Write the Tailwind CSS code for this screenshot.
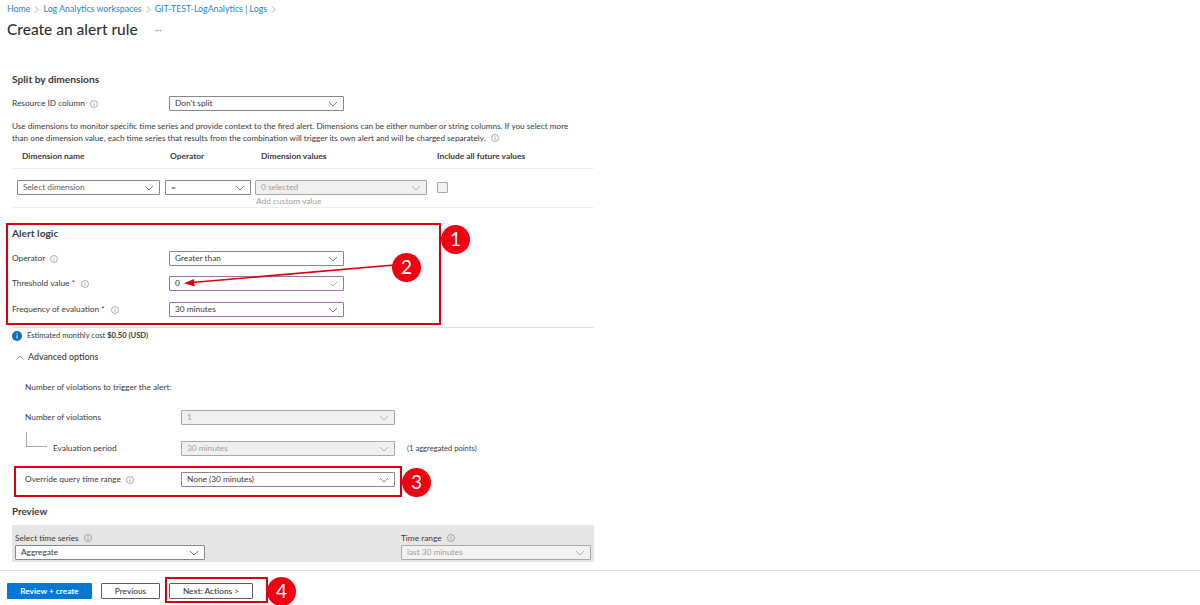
<!DOCTYPE html>
<html lang="en">
  <head>
    <meta charset="UTF-8" />
    <title>Create an alert rule</title>
    <script src="https://cdn.jsdelivr.net/npm/@tailwindcss/browser@4"></script>
  </head>
  <body>
    <div class="relative w-[1200px] h-[605px] overflow-hidden bg-white flex flex-col font-['Lato',sans-serif] text-[8.3px] text-[#3b3a39]">
      <!-- header -->
      <nav class="h-[18px] pl-[7px] flex items-center gap-[4px] text-[8.8px] text-[#2f7fc0]">
        <span>Home</span>
        <svg class="w-[5px] h-[7px]" viewBox="0 0 5 7" fill="none" stroke="#8a8886" stroke-width="0.7"><path d="M1 .5 4 3.5 1 6.5" /></svg>
        <span>Log Analytics workspaces</span>
        <svg class="w-[5px] h-[7px]" viewBox="0 0 5 7" fill="none" stroke="#8a8886" stroke-width="0.7"><path d="M1 .5 4 3.5 1 6.5" /></svg>
        <span>GIT-TEST-LogAnalytics | Logs</span>
        <svg class="w-[5px] h-[7px]" viewBox="0 0 5 7" fill="none" stroke="#8a8886" stroke-width="0.7"><path d="M1 .5 4 3.5 1 6.5" /></svg>
      </nav>
      <div class="h-[24px] pl-[7px] flex items-center">
        <h1 class="text-[15.5px] font-medium text-[#323130]">Create an alert rule</h1>
        <span class="ml-[17px] text-[9px] text-[#8a8886]">···</span>
      </div>

      <main class="flex-1 overflow-hidden px-[12px] w-[606px]">
        <!-- split by dimensions -->
        <h2 class="mt-[30px] h-[14px] leading-[14px] text-[10.2px] font-bold">Split by dimensions</h2>
        <div class="mt-[10px] h-[15px] flex items-center">
          <div class="w-[157px] flex items-center gap-[5px]">
            <span>Resource ID column</span>
            <svg class="w-[8px] h-[8px]" viewBox="0 0 8 8" fill="none" stroke="#77757a" stroke-width="0.6"><circle cx="4" cy="4" r="3.5" /><path d="M4 3.4V6M4 2v.7" /></svg>
          </div>
          <div class="w-[175px] h-[15px] border border-[#8a8886] rounded-[1px] flex items-center justify-between pl-[5px] pr-[5px]">
            <span>Don't split</span>
            <svg class="w-[10px] h-[6px]" viewBox="0 0 10 6" fill="none" stroke="#605e5c" stroke-width="0.8"><path d="M1 1 5 5 9 1" /></svg>
          </div>
        </div>
        <p class="mt-[10px] w-[566px] text-[8.2px] leading-[11.5px]">
          Use dimensions to monitor specific time series and provide context to the fired alert. Dimensions can be either number or string columns. If you select more than one dimension value, each time series that results from the combination will trigger its own alert and will be charged separately.
          <svg class="inline w-[8px] h-[8px] ml-[3px]" viewBox="0 0 8 8" fill="none" stroke="#77757a" stroke-width="0.6"><circle cx="4" cy="4" r="3.5" /><path d="M4 3.4V6M4 2v.7" /></svg>
        </p>
        <div class="mt-[6px] h-[19px] pb-[5px] border-b border-[#eeeeee] flex items-center font-bold text-[8.4px]">
          <span class="ml-[10px] w-[148px]">Dimension name</span>
          <span class="w-[91px]">Operator</span>
          <span class="w-[176px]">Dimension values</span>
          <span>Include all future values</span>
        </div>
        <div class="pt-[11px] h-[39px] border-b border-[#eeeeee]">
          <div class="h-[15px] flex items-center">
            <div class="ml-[5px] w-[143px] h-[15px] border border-[#8a8886] rounded-[1px] flex items-center justify-between px-[5px] text-[#605e5c]">
              <span>Select dimension</span>
              <svg class="w-[10px] h-[6px]" viewBox="0 0 10 6" fill="none" stroke="#605e5c" stroke-width="0.8"><path d="M1 1 5 5 9 1" /></svg>
            </div>
            <div class="ml-[5px] w-[86px] h-[15px] border border-[#8a8886] rounded-[1px] flex items-center justify-between px-[5px]">
              <span>=</span>
              <svg class="w-[10px] h-[6px]" viewBox="0 0 10 6" fill="none" stroke="#605e5c" stroke-width="0.8"><path d="M1 1 5 5 9 1" /></svg>
            </div>
            <div class="ml-[4px] w-[172px] h-[15px] border border-[#a8a8a8] bg-[#f0f0f0] rounded-[1px] flex items-center justify-between px-[5px] text-[#a19f9d]">
              <span>0 selected</span>
              <svg class="w-[10px] h-[6px]" viewBox="0 0 10 6" fill="none" stroke="#a19f9d" stroke-width="0.8"><path d="M1 1 5 5 9 1" /></svg>
            </div>
            <div class="ml-[10px] w-[11px] h-[11px] border border-[#a8a8a8] bg-[#f3f2f1] rounded-[1px]"></div>
          </div>
          <div class="ml-[244px] h-[12px] leading-[12px] text-[#a19f9d] text-[8.4px]">Add custom value</div>
        </div>

        <!-- alert logic -->
        <h2 class="mt-[20px] h-[11px] leading-[10px] border-b border-[#f3f2f1] text-[10.2px] font-bold w-[425px]">Alert logic</h2>
        <div class="mt-[12px] h-[15px] flex items-center">
          <div class="w-[157px] flex items-center gap-[5px]">
            <span>Operator</span>
            <svg class="w-[8px] h-[8px]" viewBox="0 0 8 8" fill="none" stroke="#77757a" stroke-width="0.6"><circle cx="4" cy="4" r="3.5" /><path d="M4 3.4V6M4 2v.7" /></svg>
          </div>
          <div class="w-[175px] h-[15px] border border-[#8a8886] rounded-[1px] flex items-center justify-between px-[5px]">
            <span>Greater than</span>
            <svg class="w-[10px] h-[6px]" viewBox="0 0 10 6" fill="none" stroke="#605e5c" stroke-width="0.8"><path d="M1 1 5 5 9 1" /></svg>
          </div>
        </div>
        <div class="mt-[10px] h-[15px] flex items-center">
          <div class="w-[157px] flex items-center gap-[6px]">
            <span>Threshold value <span class="text-[#a4262c]">*</span></span>
            <svg class="w-[8px] h-[8px]" viewBox="0 0 8 8" fill="none" stroke="#77757a" stroke-width="0.6"><circle cx="4" cy="4" r="3.5" /><path d="M4 3.4V6M4 2v.7" /></svg>
          </div>
          <div class="w-[175px] h-[15px] border border-[#a06cb8] rounded-[1px] flex items-center justify-between px-[5px]">
            <span>0</span>
            <svg class="w-[8px] h-[6px]" viewBox="0 0 8 6" fill="none" stroke="#7fb069" stroke-width="0.8"><path d="M1 3.2 3 5 7 1" /></svg>
          </div>
        </div>
        <div class="mt-[11px] h-[15px] flex items-center">
          <div class="w-[157px] flex items-center gap-[6px]">
            <span>Frequency of evaluation <span class="text-[#a4262c]">*</span></span>
            <svg class="w-[8px] h-[8px]" viewBox="0 0 8 8" fill="none" stroke="#77757a" stroke-width="0.6"><circle cx="4" cy="4" r="3.5" /><path d="M4 3.4V6M4 2v.7" /></svg>
          </div>
          <div class="w-[175px] h-[15px] border border-[#a06cb8] rounded-[1px] flex items-center justify-between px-[5px]">
            <span>30 minutes</span>
            <svg class="w-[10px] h-[6px]" viewBox="0 0 10 6" fill="none" stroke="#605e5c" stroke-width="0.8"><path d="M1 1 5 5 9 1" /></svg>
          </div>
        </div>
        <div class="mt-[10px] border-t border-[#e1dfdd] h-[17px] flex items-center gap-[5px] text-[7.6px]">
          <svg class="w-[10px] h-[10px]" viewBox="0 0 10 10"><circle cx="5" cy="5" r="5" fill="#0f6cbd" /><path d="M5 4.3v3.2M5 2.3v1" stroke="#fff" stroke-width="1" /></svg>
          <span>Estimated monthly cost <b class="font-bold">$0.50 (USD)</b></span>
        </div>

        <!-- advanced options -->
        <div class="mt-[6px] h-[14px] pl-[4px] flex items-center gap-[4px] text-[8.9px] font-medium">
          <svg class="w-[8px] h-[5px]" viewBox="0 0 8 5" fill="none" stroke="#605e5c" stroke-width="0.7"><path d="M.5 4.5 4 1 7.5 4.5" /></svg>
          <span>Advanced options</span>
        </div>
        <div class="mt-[16px] h-[14px] leading-[14px] pl-[13px]">Number of violations to trigger the alert:</div>
        <div class="mt-[16px] h-[15px] pl-[13px] flex items-center">
          <span class="w-[156px]">Number of violations</span>
          <div class="w-[214px] h-[15px] border border-[#a8a8a8] bg-[#f0f0f0] rounded-[1px] flex items-center justify-between px-[5px] text-[#a19f9d]">
            <span>1</span>
            <svg class="w-[10px] h-[6px]" viewBox="0 0 10 6" fill="none" stroke="#a19f9d" stroke-width="0.8"><path d="M1 1 5 5 9 1" /></svg>
          </div>
        </div>
        <div class="relative mt-[16px] h-[15px] pl-[41px] flex items-center">
          <div class="absolute left-[14px] top-[-9px] w-[21px] h-[15px] border-l border-b border-[#a8a8a8]"></div>
          <span class="w-[128px]">Evaluation period</span>
          <div class="w-[214px] h-[15px] border border-[#a8a8a8] bg-[#f0f0f0] rounded-[1px] flex items-center justify-between px-[5px] text-[#a19f9d]">
            <span>30 minutes</span>
            <svg class="w-[10px] h-[6px]" viewBox="0 0 10 6" fill="none" stroke="#a19f9d" stroke-width="0.8"><path d="M1 1 5 5 9 1" /></svg>
          </div>
          <span class="ml-[12px] text-[7.6px] whitespace-nowrap">(1 aggregated points)</span>
        </div>
        <div class="mt-[16px] h-[15px] pl-[13px] flex items-center">
          <div class="w-[156px] flex items-center gap-[5px]">
            <span>Override query time range</span>
            <svg class="w-[8px] h-[8px]" viewBox="0 0 8 8" fill="none" stroke="#77757a" stroke-width="0.6"><circle cx="4" cy="4" r="3.5" /><path d="M4 3.4V6M4 2v.7" /></svg>
          </div>
          <div class="w-[214px] h-[15px] border border-[#8a8886] rounded-[1px] flex items-center justify-between px-[5px]">
            <span>None (30 minutes)</span>
            <svg class="w-[10px] h-[6px]" viewBox="0 0 10 6" fill="none" stroke="#605e5c" stroke-width="0.8"><path d="M1 1 5 5 9 1" /></svg>
          </div>
        </div>

        <!-- preview -->
        <h2 class="mt-[17px] h-[14px] leading-[14px] text-[9.8px] font-bold">Preview</h2>
        <div class="mt-[7px] h-[37px] w-[582px] bg-[#e6e6e6] pl-[3px] pt-[6px] flex">
          <div class="w-[386px]">
            <div class="h-[14px] flex items-center gap-[5px]">
              <span>Select time series</span>
              <svg class="w-[8px] h-[8px]" viewBox="0 0 8 8" fill="none" stroke="#77757a" stroke-width="0.6"><circle cx="4" cy="4" r="3.5" /><path d="M4 3.4V6M4 2v.7" /></svg>
            </div>
            <div class="w-[190px] h-[15px] border border-[#8a8886] bg-white rounded-[1px] flex items-center justify-between px-[5px]">
              <span>Aggregate</span>
              <svg class="w-[10px] h-[6px]" viewBox="0 0 10 6" fill="none" stroke="#605e5c" stroke-width="0.8"><path d="M1 1 5 5 9 1" /></svg>
            </div>
          </div>
          <div>
            <div class="h-[14px] flex items-center gap-[5px]">
              <span>Time range</span>
              <svg class="w-[8px] h-[8px]" viewBox="0 0 8 8" fill="none" stroke="#77757a" stroke-width="0.6"><circle cx="4" cy="4" r="3.5" /><path d="M4 3.4V6M4 2v.7" /></svg>
            </div>
            <div class="w-[190px] h-[15px] border border-[#a8a8a8] bg-[#f3f2f1] rounded-[1px] flex items-center justify-between px-[5px] text-[#a19f9d]">
              <span>last 30 minutes</span>
              <svg class="w-[10px] h-[6px]" viewBox="0 0 10 6" fill="none" stroke="#a19f9d" stroke-width="0.8"><path d="M1 1 5 5 9 1" /></svg>
            </div>
          </div>
        </div>
      </main>

      <!-- footer buttons -->
      <footer class="h-[35px] border-t border-[#e1dfdd] pl-[7px] pt-[12px] flex items-start font-medium">
        <button class="w-[85px] h-[16px] bg-[#0078d4] rounded-[1px] text-white font-bold">Review + create</button>
        <button class="ml-[9px] w-[59px] h-[16px] border border-[#605e5c] rounded-[1px]">Previous</button>
        <button class="ml-[9px] w-[84px] h-[16px] border border-[#605e5c] rounded-[1px]">Next: Actions &gt;</button>
      </footer>

      <!-- red annotations drawn over the screenshot -->
      <div class="absolute left-[6px] top-[223px] w-[435px] h-[102px] border-2 border-[#d9000f]"></div>
      <div class="absolute left-[14px] top-[466px] w-[388px] h-[31px] border-2 border-[#d9000f]"></div>
      <div class="absolute left-[165px] top-[577px] w-[103px] h-[26px] border-2 border-[#d9000f]"></div>
      <svg class="absolute left-0 top-0 w-[1200px] h-[605px]" viewBox="0 0 1200 605" fill="none">
        <path d="M394 265 192 282.5" stroke="#d9000f" stroke-width="1.6" />
        <path d="M184 283.2 194 279 194.7 286.5Z" fill="#d9000f" />
      </svg>
      <div class="absolute left-[441px] top-[225px] w-[29px] h-[29px] rounded-full bg-[#f00010] text-white text-[19px] flex items-center justify-center">1</div>
      <div class="absolute left-[392px] top-[253px] w-[29px] h-[29px] rounded-full bg-[#f00010] text-white text-[19px] flex items-center justify-center">2</div>
      <div class="absolute left-[402px] top-[468px] w-[29px] h-[29px] rounded-full bg-[#f00010] text-white text-[19px] flex items-center justify-center">3</div>
      <div class="absolute left-[267px] top-[577px] w-[29px] h-[29px] rounded-full bg-[#f00010] text-white text-[19px] flex items-center justify-center">4</div>
    </div>
  </body>
</html>
